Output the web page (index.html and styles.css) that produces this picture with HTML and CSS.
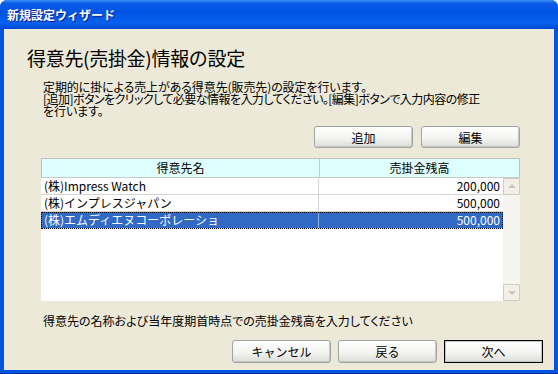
FILE: index.html
```html
<!DOCTYPE html>
<html lang="ja">
  <head>
    <meta charset="UTF-8" />
    <link rel="stylesheet" href="styles.css">
    <title>新規設定ウィザード</title>
  </head>
  <body>
    <div class="window">
      <div class="titlebar">
        <span class="title">新規設定ウィザード</span>
      </div>
      <div class="client">
        <h1 class="heading">得意先(売掛金)情報の設定</h1>
        <p class="desc">
          <span class="line">定期的に掛による売上がある得意先(販売先)の設定を行います。</span>
          <span class="line tight">[追加]ボタンをクリックして必要な情報を入力してください。[編集]ボタンで入力内容の修正</span>
          <span class="line">を行います。</span>
        </p>

        <div class="actions">
          <button class="btn">追加</button>
          <button class="btn">編集</button>
        </div>

        <!-- customer list -->
        <div class="grid">
          <div class="grid-head">
            <div class="cell name">得意先名</div>
            <div class="cell amount">売掛金残高</div>
          </div>
          <div class="grid-body">
            <div class="rows">
              <div class="row">
                <div class="cell name">(株)Impress Watch</div>
                <div class="cell amount">200,000</div>
              </div>
              <div class="row">
                <div class="cell name">(株)インプレスジャパン</div>
                <div class="cell amount">500,000</div>
              </div>
              <div class="row selected">
                <div class="cell name">(株)エムディエヌコーポレーショ</div>
                <div class="cell amount">500,000</div>
              </div>
            </div>
            <div class="scrollbar">
              <div class="arrow up"></div>
              <div class="track"></div>
              <div class="arrow down"></div>
            </div>
          </div>
        </div>

        <p class="hint">得意先の名称および当年度期首時点での売掛金残高を入力してください</p>

        <div class="footer">
          <button class="btn">キャンセル</button>
          <button class="btn">戻る</button>
          <button class="btn default">次へ</button>
        </div>
      </div>
    </div>
  </body>
</html>
```

FILE: styles.css
```css
:root {
  --face: #ece9d8;
  --frame: #0054e3;
  --select: #316ac5;
  --grid-line: #d4d4d4;
}

body {
  margin: 0;
  font-family: "Noto Sans CJK JP", sans-serif;
  font-size: 12px;
  color: #000;
}

/* window frame */
.window {
  width: 558px;
  height: 374px;
  display: flex;
  flex-direction: column;
  background: var(--frame);
  border-radius: 7px 7px 0 0;
  overflow: hidden;
  box-sizing: border-box;
  border-bottom: 1px solid #002fa8;
}

.titlebar {
  height: 29px;
  flex: none;
  display: flex;
  align-items: center;
  padding-left: 7px;
  background: linear-gradient(
    to bottom,
    #3c8ff8 0%,
    #0a5ce8 12%,
    #0054e3 45%,
    #0a61ee 80%,
    #0046d4 100%
  );
}

.title {
  color: #fff;
  font-weight: bold;
  font-size: 12px;
  line-height: 14px;
  text-shadow: 1px 1px #0a1e8c;
  margin-top: 1px;
}

.client {
  flex: 1;
  margin: 0 4px 3px 4px;
  background: var(--face);
  display: flex;
  flex-direction: column;
}

.heading {
  margin: 18px 0 0 23px;
  font-size: 19px;
  font-weight: normal;
  line-height: 22px;
  letter-spacing: -0.3px;
}

.desc {
  margin: 12px 0 0 39px;
  line-height: 12px;
  font-feature-settings: "palt";
}

.desc .line {
  display: block;
  letter-spacing: -0.1px;
}

.desc .line.tight {
  letter-spacing: -0.55px;
}

/* buttons */
.btn {
  width: 99px;
  height: 22px;
  padding: 0;
  font-family: inherit;
  font-size: 12px;
  color: #000;
  border: 1px solid #a3a3a3;
  border-radius: 3px;
  background: linear-gradient(to bottom, #ffffff 0%, #f4f4f2 55%, #dcdcd8 100%);
  box-shadow: inset -1px -1px 0 #c8c8c4;
}

.btn.default {
  border: 1px solid #000;
  border-radius: 0;
  box-shadow: inset 0 0 0 1px #c4c4c0;
}

.actions {
  display: flex;
  justify-content: flex-end;
  gap: 8px;
  margin: 9px 34px 0 0;
}

/* grid */
.grid {
  margin: 10px 34px 0 37px;
  height: 143px;
  display: flex;
  flex-direction: column;
  background: #fff;
}

.grid-head {
  display: flex;
  height: 20px;
  background: #dfffff;
  border: 1px solid #c0c0c0;
  border-bottom: 1px solid #c8c8c8;
  box-sizing: border-box;
}

.cell.name {
  width: 278px;
  border-right: 1px solid #c8c8c8;
  padding-left: 3px;
  box-sizing: border-box;
}

.cell.amount {
  flex: 1;
  padding-right: 3px;
  text-align: right;
}

.grid-head .cell.name,
.grid-head .cell.amount {
  padding: 0;
  text-align: center;
  line-height: 18px;
}

.grid-body {
  flex: 1;
  display: flex;
}

.rows {
  flex: 1;
}

.row {
  display: flex;
  height: 17px;
  line-height: 16px;
  border-bottom: 1px solid var(--grid-line);
  box-sizing: border-box;
}

.row .cell.name {
  border-right-color: var(--grid-line);
}

.row.selected {
  background: var(--select);
  color: #fff;
  outline: 1px dotted #000;
  outline-offset: -1px;
}

.row.selected .cell.name {
  border-right-color: #8fb0e6;
}

/* disabled scrollbar */
.scrollbar {
  width: 17px;
  display: flex;
  flex-direction: column;
  background: #f5f4ef;
}

.track {
  flex: 1;
}

.arrow {
  height: 17px;
  background: #f1efe6;
  border: 1px solid #cfcdc2;
  border-radius: 1px;
  box-sizing: border-box;
  position: relative;
}

.arrow::after {
  content: "";
  position: absolute;
  left: 4px;
  border-left: 4px solid transparent;
  border-right: 4px solid transparent;
}

.arrow.up::after {
  top: 5px;
  border-bottom: 4px solid #c9c7ba;
}

.arrow.down::after {
  top: 6px;
  border-top: 4px solid #c9c7ba;
}

.hint {
  margin: 13px 0 0 39px;
  line-height: 14px;
  font-feature-settings: "palt";
}

.footer {
  display: flex;
  justify-content: flex-end;
  gap: 7px;
  margin: 12px 11px 0 0;
}

.footer .btn {
  height: 23px;
}
```
